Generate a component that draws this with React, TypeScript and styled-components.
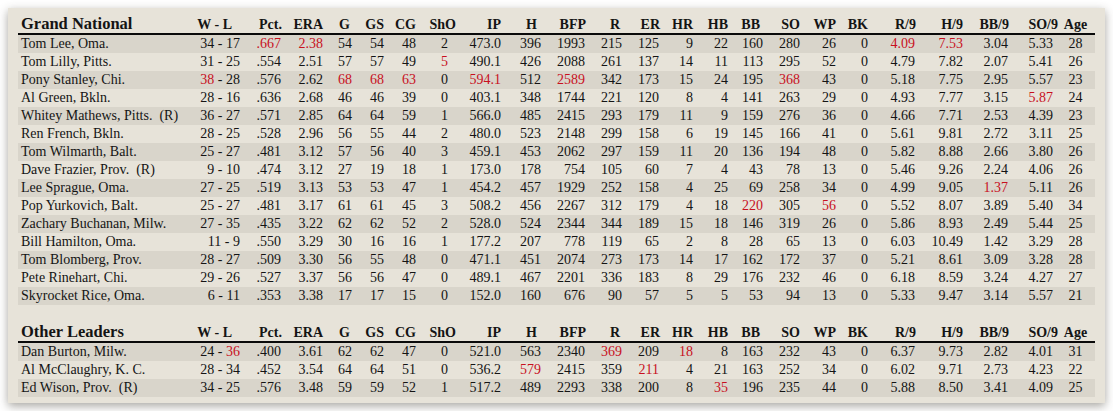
import React from "react";
import styled, { createGlobalStyle } from "styled-components";

const GlobalStyle = createGlobalStyle`
  html, body { margin: 0; padding: 0; background: #ffffff; }
  body { font-family: "Liberation Serif", "Times New Roman", serif; color: #141414; }
`;

type Col = { key: string; label: string; w: number; dp: number; hp: number; center?: boolean };

const COLS: Col[] = [
  { key: "wl", label: "W - L", w: 60, dp: 0, hp: 8 },
  { key: "pct", label: "Pct.", w: 42, dp: 1, hp: 0 },
  { key: "era", label: "ERA", w: 41, dp: 0, hp: 0 },
  { key: "g", label: "G", w: 29, dp: 0, hp: 2 },
  { key: "gs", label: "GS", w: 32, dp: 0, hp: 0 },
  { key: "cg", label: "CG", w: 32, dp: 0, hp: 0 },
  { key: "sho", label: "ShO", w: 40, dp: 8, hp: 0 },
  { key: "ip", label: "IP", w: 45, dp: 0, hp: 0 },
  { key: "h", label: "H", w: 40, dp: 0, hp: 4 },
  { key: "bfp", label: "BFP", w: 45, dp: 1, hp: 0 },
  { key: "r", label: "R", w: 36, dp: 0, hp: 2 },
  { key: "er", label: "ER", w: 38, dp: 1, hp: 0 },
  { key: "hr", label: "HR", w: 33, dp: 0, hp: 0 },
  { key: "hb", label: "HB", w: 35, dp: 0, hp: 0 },
  { key: "bb", label: "BB", w: 35, dp: 0, hp: 3 },
  { key: "so", label: "SO", w: 37, dp: 0, hp: 0 },
  { key: "wp", label: "WP", w: 36, dp: 0, hp: 0 },
  { key: "bk", label: "BK", w: 32, dp: 0, hp: 0 },
  { key: "r9", label: "R/9", w: 48, dp: 1, hp: 0 },
  { key: "h9", label: "H/9", w: 47, dp: 0, hp: 0 },
  { key: "bb9", label: "BB/9", w: 46, dp: 1, hp: 0 },
  { key: "so9", label: "SO/9", w: 49, dp: 5, hp: 0 },
  { key: "age", label: "Age", w: 37, dp: 2, hp: 2, center: true },
];

const TEMPLATE = `162px ${COLS.map((c) => `${c.w}px`).join(" ")}`;

// "!" prefix marks a value printed in red
const GRAND: string[][] = [
  ["Tom Lee, Oma.", "34 - 17", "!.667", "!2.38", "54", "54", "48", "2", "473.0", "396", "1993", "215", "125", "9", "22", "160", "280", "26", "0", "!4.09", "!7.53", "3.04", "5.33", "28"],
  ["Tom Lilly, Pitts.", "31 - 25", ".554", "2.51", "57", "57", "49", "!5", "490.1", "426", "2088", "261", "137", "14", "11", "113", "295", "52", "0", "4.79", "7.82", "2.07", "5.41", "26"],
  ["Pony Stanley, Chi.", "!38 - 28", ".576", "2.62", "!68", "!68", "!63", "0", "!594.1", "512", "!2589", "342", "173", "15", "24", "195", "!368", "43", "0", "5.18", "7.75", "2.95", "5.57", "23"],
  ["Al Green, Bkln.", "28 - 16", ".636", "2.68", "46", "46", "39", "0", "403.1", "348", "1744", "221", "120", "8", "4", "141", "263", "29", "0", "4.93", "7.77", "3.15", "!5.87", "24"],
  ["Whitey Mathews, Pitts.  (R)", "36 - 27", ".571", "2.85", "64", "64", "59", "1", "566.0", "485", "2415", "293", "179", "11", "9", "159", "276", "36", "0", "4.66", "7.71", "2.53", "4.39", "23"],
  ["Ren French, Bkln.", "28 - 25", ".528", "2.96", "56", "55", "44", "2", "480.0", "523", "2148", "299", "158", "6", "19", "145", "166", "41", "0", "5.61", "9.81", "2.72", "3.11", "25"],
  ["Tom Wilmarth, Balt.", "25 - 27", ".481", "3.12", "57", "56", "40", "3", "459.1", "453", "2062", "297", "159", "11", "20", "136", "194", "48", "0", "5.82", "8.88", "2.66", "3.80", "26"],
  ["Dave Frazier, Prov.  (R)", "9 - 10", ".474", "3.12", "27", "19", "18", "1", "173.0", "178", "754", "105", "60", "7", "4", "43", "78", "13", "0", "5.46", "9.26", "2.24", "4.06", "26"],
  ["Lee Sprague, Oma.", "27 - 25", ".519", "3.13", "53", "53", "47", "1", "454.2", "457", "1929", "252", "158", "4", "25", "69", "258", "34", "0", "4.99", "9.05", "!1.37", "5.11", "26"],
  ["Pop Yurkovich, Balt.", "25 - 27", ".481", "3.17", "61", "61", "45", "3", "508.2", "456", "2267", "312", "179", "4", "18", "!220", "305", "!56", "0", "5.52", "8.07", "3.89", "5.40", "34"],
  ["Zachary Buchanan, Milw.", "27 - 35", ".435", "3.22", "62", "62", "52", "2", "528.0", "524", "2344", "344", "189", "15", "18", "146", "319", "26", "0", "5.86", "8.93", "2.49", "5.44", "25"],
  ["Bill Hamilton, Oma.", "11 - 9", ".550", "3.29", "30", "16", "16", "1", "177.2", "207", "778", "119", "65", "2", "8", "28", "65", "13", "0", "6.03", "10.49", "1.42", "3.29", "28"],
  ["Tom Blomberg, Prov.", "28 - 27", ".509", "3.30", "56", "55", "48", "0", "471.1", "451", "2074", "273", "173", "14", "17", "162", "172", "37", "0", "5.21", "8.61", "3.09", "3.28", "28"],
  ["Pete Rinehart, Chi.", "29 - 26", ".527", "3.37", "56", "56", "47", "0", "489.1", "467", "2201", "336", "183", "8", "29", "176", "232", "46", "0", "6.18", "8.59", "3.24", "4.27", "27"],
  ["Skyrocket Rice, Oma.", "6 - 11", ".353", "3.38", "17", "17", "15", "0", "152.0", "160", "676", "90", "57", "5", "5", "53", "94", "13", "0", "5.33", "9.47", "3.14", "5.57", "21"],
];

const OTHER: string[][] = [
  ["Dan Burton, Milw.", "24 - !36", ".400", "3.61", "62", "62", "47", "0", "521.0", "563", "2340", "!369", "209", "!18", "8", "163", "232", "43", "0", "6.37", "9.73", "2.82", "4.01", "31"],
  ["Al McClaughry, K. C.", "28 - 34", ".452", "3.54", "64", "64", "51", "0", "536.2", "!579", "2415", "359", "!211", "4", "21", "163", "252", "34", "0", "6.02", "9.71", "2.73", "4.23", "22"],
  ["Ed Wison, Prov.  (R)", "34 - 25", ".576", "3.48", "59", "59", "52", "1", "517.2", "489", "2293", "338", "200", "8", "!35", "196", "235", "44", "0", "5.88", "8.50", "3.41", "4.09", "25"],
];

const Page = styled.div`
  padding: 8px;
`;

const Panel = styled.div`
  width: 1077px;
  padding: 7px 10px 6px 10px;
  background: #e7e3d9;
  box-shadow: 0 3px 9px rgba(60, 55, 45, 0.45);
`;

const Section = styled.div`
  & + & {
    margin-top: 18px;
  }
`;

const HeadRow = styled.div`
  display: grid;
  grid-template-columns: ${TEMPLATE};
  height: 18px;
  align-items: baseline;
  border-bottom: 2px solid #0a0a0a;
  line-height: 18px;
`;

const Title = styled.div`
  padding-left: 3px;
  font-weight: bold;
  font-size: 16.5px;
  white-space: nowrap;
`;

const HeadCell = styled.div<{ $pr: number; $center?: boolean }>`
  font-weight: bold;
  font-size: 14px;
  white-space: nowrap;
  text-align: ${(p) => (p.$center ? "center" : "right")};
  padding-right: ${(p) => p.$pr}px;
`;

const Row = styled.div<{ $dark: boolean }>`
  display: grid;
  grid-template-columns: ${TEMPLATE};
  height: 18px;
  line-height: 18px;
  font-size: 14px;
  background: ${(p) => (p.$dark ? "#d9d5cb" : "#e7e3d9")};
`;

const NameCell = styled.div`
  padding-left: 3px;
  white-space: pre;
`;

const Cell = styled.div<{ $pr: number; $center?: boolean }>`
  white-space: pre;
  text-align: ${(p) => (p.$center ? "center" : "right")};
  padding-right: ${(p) => p.$pr}px;
`;

const Val = styled.span<{ $red: boolean }>`
  color: ${(p) => (p.$red ? "#c8101e" : "inherit")};
`;

function renderValue(v: string) {
  if (v.includes(" - ")) {
    const [a, b] = v.split(" - ");
    return (
      <>
        <Val $red={a.startsWith("!")}>{a.replace("!", "")}</Val>
        {" - "}
        <Val $red={b.startsWith("!")}>{b.replace("!", "")}</Val>
      </>
    );
  }
  return <Val $red={v.startsWith("!")}>{v.replace("!", "")}</Val>;
}

function Table({ title, rows }: { title: string; rows: string[][] }) {
  return (
    <Section>
      <HeadRow>
        <Title>{title}</Title>
        {COLS.map((c) => (
          <HeadCell key={c.key} $pr={c.hp} $center={c.center}>
            {c.label}
          </HeadCell>
        ))}
      </HeadRow>
      {rows.map((r, i) => (
        <Row key={i} $dark={i % 2 === 0}>
          <NameCell>{r[0]}</NameCell>
          {COLS.map((c, j) => (
            <Cell key={c.key} $pr={c.dp} $center={c.center}>
              {renderValue(r[j + 1])}
            </Cell>
          ))}
        </Row>
      ))}
    </Section>
  );
}

export default function App() {
  return (
    <>
      <GlobalStyle />
      <Page>
        <Panel>
          <Table title="Grand National" rows={GRAND} />
          <Table title="Other Leaders" rows={OTHER} />
        </Panel>
      </Page>
    </>
  );
}
